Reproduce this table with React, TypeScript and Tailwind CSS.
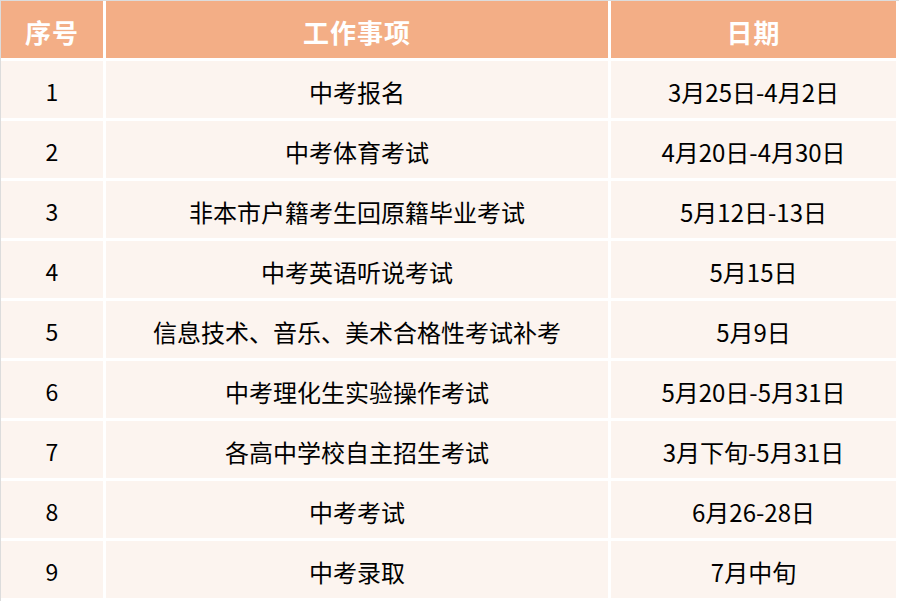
import React from 'react';

const rows: [string, string, string][] = [
  ['1', '中考报名', '3月25日-4月2日'],
  ['2', '中考体育考试', '4月20日-4月30日'],
  ['3', '非本市户籍考生回原籍毕业考试', '5月12日-13日'],
  ['4', '中考英语听说考试', '5月15日'],
  ['5', '信息技术、音乐、美术合格性考试补考', '5月9日'],
  ['6', '中考理化生实验操作考试', '5月20日-5月31日'],
  ['7', '各高中学校自主招生考试', '3月下旬-5月31日'],
  ['8', '中考考试', '6月26-28日'],
  ['9', '中考录取', '7月中旬'],
];

const font = { fontFamily: '"Noto Sans CJK SC", "Noto Sans", sans-serif' };

export default function App() {
  return (
    <div className="w-[899px] h-[601px] bg-white overflow-hidden" style={font}>
      <div className="border-l border-t border-[#dcdcdc] h-[601px]">
        <div className="grid grid-cols-[102px_502px_285px] auto-rows-[57px] gap-[3px]">
          {['序号', '工作事项', '日期'].map(h => (
            <div
              key={h}
              className="bg-[#f3ae86] flex items-center justify-center pt-[3px] text-white text-[26px] font-bold tracking-[1px]"
            >
              {h}
            </div>
          ))}
          {rows.map(([n, item, date]) => (
            <React.Fragment key={n}>
              <div className="bg-[#fcf4ef] flex items-center justify-center pt-[4px] text-[23px] text-black">
                {n}
              </div>
              <div className="bg-[#fcf4ef] flex items-center justify-center pt-[4px] text-[24px] text-black">
                {item}
              </div>
              <div className="bg-[#fcf4ef] flex items-center justify-center pt-[4px] text-[24px] text-black">
                {date}
              </div>
            </React.Fragment>
          ))}
        </div>
      </div>
    </div>
  );
}
